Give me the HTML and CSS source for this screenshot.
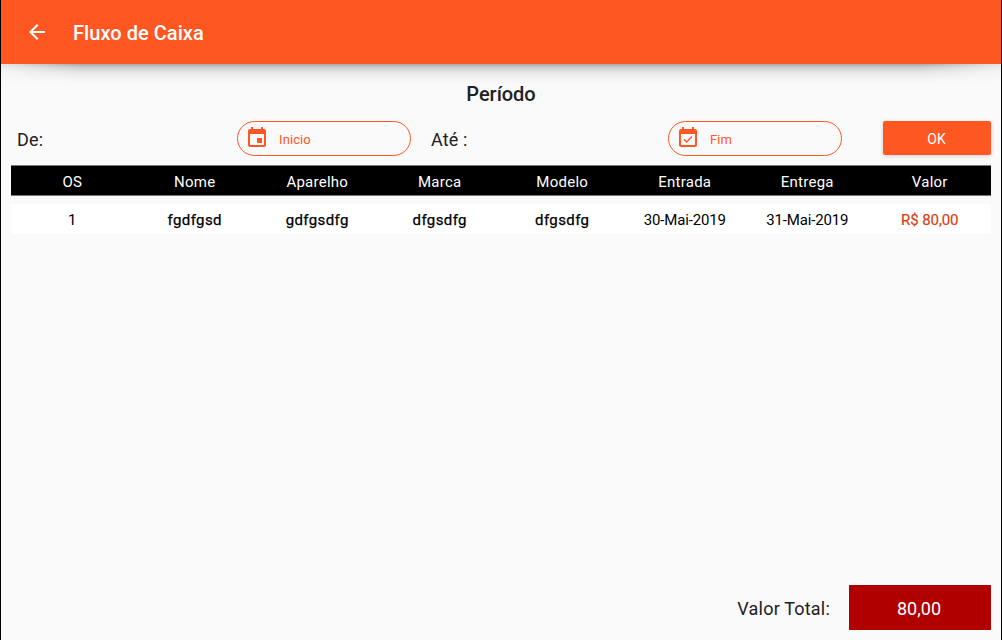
FILE: index.html
```html
<!DOCTYPE html>
<html lang="pt-BR">
<head>
<meta charset="utf-8">
<title>Fluxo de Caixa</title>
<link rel="stylesheet" href="styles.css">
</head>
<body>
<div class="app">
  <header class="toolbar">
    <svg class="back" viewBox="0 0 24 24"><path d="M20 11H7.83l5.59-5.59L12 4l-8 8 8 8 1.41-1.41L7.83 13H20v-2z"/></svg>
    <h1 class="title">Fluxo de Caixa</h1>
  </header>
  <main class="content">
    <h2 class="period">Período</h2>
    <div class="filters">
      <span class="label from">De:</span>
      <div class="field">
        <svg class="icon" viewBox="0 0 24 24"><path d="M17 12h-5v5h5v-5zM16 1v2H8V1H6v2H5c-1.11 0-1.99.9-1.99 2L3 19c0 1.1.89 2 2 2h14c1.1 0 2-.9 2-2V5c0-1.1-.9-2-2-2h-1V1h-2zm3 18H5V8h14v11z"/></svg>
        <span>Inicio</span>
      </div>
      <span class="label to">Até :</span>
      <div class="field">
        <svg class="icon" viewBox="0 0 24 24"><path d="M16.53 11.06L15.47 10l-4.88 4.88-2.12-2.12-1.06 1.06L10.59 17l5.94-5.94zM19 3h-1V1h-2v2H8V1H6v2H5c-1.11 0-1.99.9-1.99 2L3 19c0 1.1.89 2 2 2h14c1.1 0 2-.9 2-2V5c0-1.1-.9-2-2-2zm0 16H5V8h14v11z"/></svg>
        <span>Fim</span>
      </div>
      <button class="ok">OK</button>
    </div>
    <div class="row head">
      <span>OS</span><span>Nome</span><span>Aparelho</span><span>Marca</span><span>Modelo</span><span>Entrada</span><span>Entrega</span><span>Valor</span>
    </div>
    <div class="row item">
      <span>1</span><span class="name">fgdfgsd</span><span class="name">gdfgsdfg</span><span class="name">dfgsdfg</span><span class="name">dfgsdfg</span><span>30-Mai-2019</span><span>31-Mai-2019</span><span class="price">R$ 80,00</span>
    </div>
    <footer class="total">
      <span class="total-label">Valor Total:</span>
      <span class="total-value">80,00</span>
    </footer>
  </main>
</div>
</body>
</html>
```
FILE: styles.css
```css
* { box-sizing: border-box; }
body { margin: 0; font-family: Roboto, "Liberation Sans", sans-serif; color: #212121; }
.app {
  width: 1002px; height: 640px; overflow: hidden;
  display: flex; flex-direction: column;
  background: #fafafa;
  border: solid #000; border-width: 0 1px;
}
.toolbar {
  position: relative; flex: none; height: 64px; padding-left: 24px;
  display: flex; align-items: center; gap: 24px;
  background: #ff5722; color: #fff;
}
.toolbar::after {
  content: ""; position: absolute; left: 0; right: 0; top: 64px; height: 20px;
  background: linear-gradient(rgba(0,0,0,.32), rgba(0,0,0,.16) 20%, rgba(0,0,0,.07) 45%, rgba(0,0,0,.025) 75%, transparent);
  mask-image: linear-gradient(90deg, rgba(0,0,0,.25), #000 80px, #000 calc(100% - 80px), rgba(0,0,0,.25));
}
.back { width: 24px; height: 24px; fill: #fff; }
.title { margin: 2px 0 0; font-size: 20px; font-weight: 500; line-height: 24px; letter-spacing: .05px; }
.content { flex: 1; display: flex; flex-direction: column; padding: 17px 10px 10px; }
.period { margin: 0; text-align: center; font-size: 20px; font-weight: 500; line-height: 27px; letter-spacing: -.05px; }
.filters { display: flex; align-items: center; height: 35px; margin: 13px 0 9px; }
.label { font-size: 18px; line-height: 36px; letter-spacing: .15px; padding-top: 2px; }
.from { width: 226px; padding-left: 6px; }
.to { width: 257px; padding-left: 20px; }
.field {
  width: 174px; height: 35px; padding: 0 7px; flex: none;
  display: flex; align-items: center; gap: 10px;
  border: 1px solid #ff5722; border-radius: 18px;
  color: #ff5722; font-size: 13px; letter-spacing: .1px;
}
.field span { padding-top: 2px; }
.icon { width: 24px; height: 24px; margin-top: -2px; fill: #ff5722; }
.ok {
  width: 108px; height: 34px; margin-left: auto; margin-top: -1px; padding: 2px 1px 0 0;
  border: 0; border-radius: 2px; background: #ff5722; color: #fff;
  font: 14px Roboto, sans-serif; letter-spacing: .1px;
  box-shadow: 0 1px 4px rgba(0,0,0,.18);
}
.row {
  display: grid; grid-template-columns: repeat(8, 1fr); align-items: center;
  height: 30px; padding-top: 2px;
  text-align: center; font-size: 15px; letter-spacing: .25px;
}
.head { height: 31px; padding-top: 3px; background: #000; border: solid #777; border-width: 1px 0; color: #fff; }
.item { margin-top: 8px; background: #fff; color: #000; letter-spacing: -.15px; }
.name { letter-spacing: .4px; -webkit-text-stroke: .25px #000; }
.price { color: #d84315; letter-spacing: -.08px; -webkit-text-stroke: .2px #d84315; }
.total { margin-top: auto; display: flex; justify-content: flex-end; align-items: center; gap: 18px; height: 45px; }
.total-label { font-size: 18px; letter-spacing: .2px; padding: 2px 1px 0 0; }
.total-value { width: 142px; height: 45px; padding-right: 2px; line-height: 47px; text-align: center; font-size: 18px; background: #b00000; color: #fff; }
```
